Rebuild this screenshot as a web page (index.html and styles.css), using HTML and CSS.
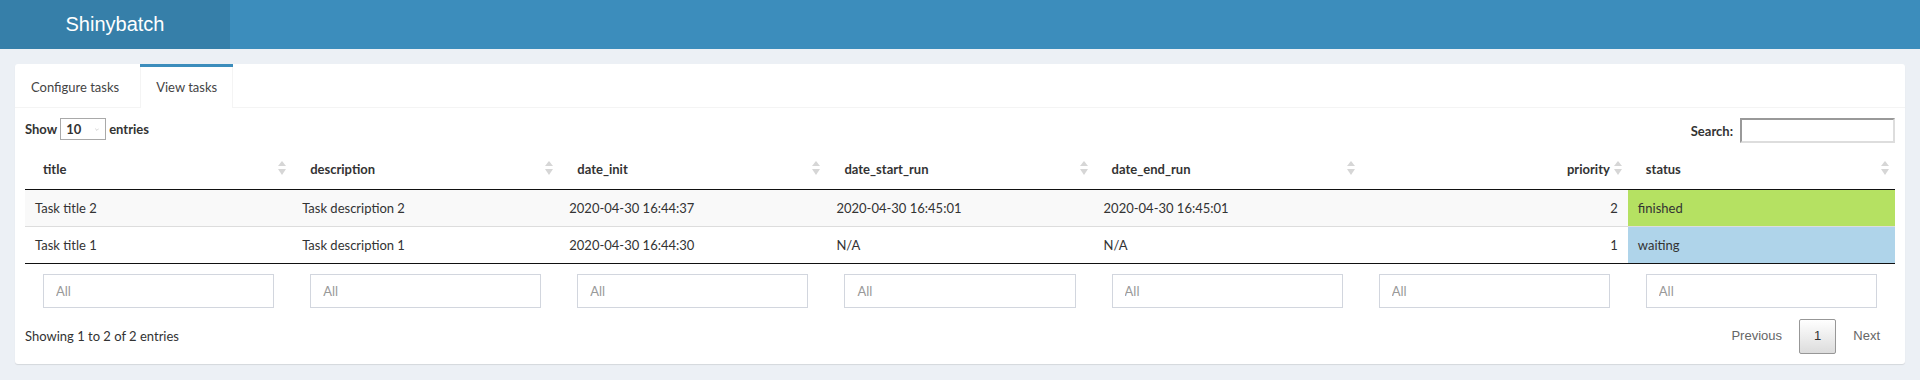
FILE: index.html
```html
<!DOCTYPE html>
<html lang="en">
<head>
    <meta charset="UTF-8">
    <meta name="viewport" content="width=device-width, initial-scale=1.0">
    <title>Shinybatch</title>
    <link rel="stylesheet" href="styles.css">
</head>
<body>
    <header class="main-header">
        <div class="logo">Shinybatch</div>
        <nav class="navbar"></nav>
    </header>

    <section class="content">
        <div class="nav-tabs-custom">
            <ul class="nav-tabs">
                <li><a href="#">Configure tasks</a></li>
                <li class="active"><a href="#">View tasks</a></li>
            </ul>

            <div class="tab-content">
                <div class="dt-top">
                    <div class="dt-length">
                        <span>Show</span>
                        <div class="length-select">
                            <span>10</span>
                            <svg width="9" height="5" viewBox="0 0 9 5"><path d="M0.5 0.5l4 4 4-4" fill="none" stroke="#999" stroke-width="1"/></svg>
                        </div>
                        <span>entries</span>
                    </div>
                    <div class="dt-filter">
                        <span>Search:</span>
                        <input type="search" class="search-input">
                    </div>
                </div>

                <table class="data-table">
                    <thead>
                        <tr>
                            <th>title<span class="sort-icon"></span></th>
                            <th>description<span class="sort-icon"></span></th>
                            <th>date_init<span class="sort-icon"></span></th>
                            <th>date_start_run<span class="sort-icon"></span></th>
                            <th>date_end_run<span class="sort-icon"></span></th>
                            <th class="num">priority<span class="sort-icon"></span></th>
                            <th>status<span class="sort-icon"></span></th>
                        </tr>
                    </thead>
                    <tbody>
                        <tr class="odd">
                            <td>Task title 2</td>
                            <td>Task description 2</td>
                            <td>2020-04-30 16:44:37</td>
                            <td>2020-04-30 16:45:01</td>
                            <td>2020-04-30 16:45:01</td>
                            <td class="num">2</td>
                            <td class="status-finished">finished</td>
                        </tr>
                        <tr>
                            <td>Task title 1</td>
                            <td>Task description 1</td>
                            <td>2020-04-30 16:44:30</td>
                            <td>N/A</td>
                            <td>N/A</td>
                            <td class="num">1</td>
                            <td class="status-waiting">waiting</td>
                        </tr>
                    </tbody>
                    <tfoot>
                        <tr>
                            <td><input type="text" class="col-filter" placeholder="All"></td>
                            <td><input type="text" class="col-filter" placeholder="All"></td>
                            <td><input type="text" class="col-filter" placeholder="All"></td>
                            <td><input type="text" class="col-filter" placeholder="All"></td>
                            <td><input type="text" class="col-filter" placeholder="All"></td>
                            <td><input type="text" class="col-filter" placeholder="All"></td>
                            <td><input type="text" class="col-filter" placeholder="All"></td>
                        </tr>
                    </tfoot>
                </table>

                <div class="dt-bottom">
                    <div class="dt-info">Showing 1 to 2 of 2 entries</div>
                    <div class="dt-paginate">
                        <a class="page-btn disabled">Previous</a>
                        <a class="page-btn current">1</a>
                        <a class="page-btn disabled">Next</a>
                    </div>
                </div>
            </div>
        </div>
    </section>
</body>
</html>
```

FILE: styles.css
```css
* {
    margin: 0;
    padding: 0;
    box-sizing: border-box;
}

body {
    font-family: Lato, "Noto Sans", sans-serif;
    font-size: 13px;
    line-height: 20px;
    color: #333;
    background: #ecf0f5;
}

.main-header {
    display: flex;
    height: 49px;
}

.logo {
    width: 230px;
    background: #367fa9;
    color: #fff;
    font-family: "Liberation Sans", Arial, sans-serif;
    font-size: 20px;
    line-height: 49px;
    text-align: center;
}

.navbar {
    flex: 1;
    background: #3c8dbc;
}

.content {
    padding: 15px;
}

.nav-tabs-custom {
    background: #fff;
    border-radius: 3px;
    box-shadow: 0 1px 1px rgba(0,0,0,0.1);
}

.nav-tabs {
    list-style: none;
    display: flex;
    border-bottom: 1px solid #f4f4f4;
}

.nav-tabs li {
    border-top: 3px solid transparent;
    margin-right: 5px;
    margin-bottom: -1px;
}

.nav-tabs li a {
    display: block;
    padding: 10px 15px 11px;
    color: #444;
    text-decoration: none;
    border-left: 1px solid transparent;
    border-right: 1px solid transparent;
}

.nav-tabs li.active {
    border-top-color: #3c8dbc;
}

.nav-tabs li.active a {
    background: #fff;
    border-left-color: #f4f4f4;
    border-right-color: #f4f4f4;
}

.tab-content {
    padding: 10px;
}

.dt-top {
    display: flex;
    justify-content: space-between;
    align-items: flex-start;
    height: 25px;
    font-weight: bold;
}

.dt-length {
    display: flex;
    align-items: center;
    gap: 3px;
    height: 22px;
}

.length-select {
    display: flex;
    align-items: center;
    gap: 14px;
    width: 46px;
    height: 22px;
    padding: 0 6px 0 5px;
    border: 1px solid #a9a9a9;
    background: #fff;
}

.dt-filter {
    display: flex;
    align-items: center;
    gap: 7px;
}

.search-input {
    width: 155px;
    height: 25px;
    border-top: 2px solid #999;
    border-left: 2px solid #999;
    border-bottom: 2px solid #ddd;
    border-right: 2px solid #ddd;
    outline: none;
}

.data-table {
    width: 100%;
    table-layout: fixed;
    border-collapse: separate;
    border-spacing: 0;
    margin-top: 6px;
}

.data-table th {
    position: relative;
    padding: 10px 18px;
    text-align: left;
    font-weight: bold;
    border-bottom: 1px solid #111;
}

.data-table td {
    padding: 8px 10px;
    white-space: nowrap;
}

.data-table tbody tr + tr td {
    border-top: 1px solid #ddd;
}

.data-table tbody tr.odd td {
    background: #f9f9f9;
}

.data-table .num {
    text-align: right;
}

.data-table tbody tr td.status-finished {
    background: #b5e162;
}

.data-table tbody tr td.status-waiting {
    background: #afd4ea;
}

.sort-icon {
    position: absolute;
    right: 6px;
    top: 12px;
    width: 8px;
    height: 14px;
}

.sort-icon::before,
.sort-icon::after {
    content: "";
    position: absolute;
    left: 0;
    border-left: 4px solid transparent;
    border-right: 4px solid transparent;
}

.sort-icon::before {
    top: 0;
    border-bottom: 5px solid #d6d6d6;
}

.sort-icon::after {
    bottom: 0;
    border-top: 6px solid #d6d6d6;
}

.data-table tfoot td {
    padding: 10px 18px;
    border-top: 1px solid #111;
}

.col-filter {
    display: block;
    width: 100%;
    height: 34px;
    padding: 6px 12px;
    border: 1px solid #d2d6de;
    font-family: inherit;
    font-size: 13px;
    color: #555;
    outline: none;
}

.col-filter::placeholder {
    color: #999;
}

.dt-bottom {
    display: flex;
    justify-content: space-between;
    align-items: center;
}

.dt-paginate {
    display: flex;
    align-items: center;
    gap: 2px;
}

.page-btn {
    padding: 7px 14px;
    font-family: "Liberation Sans", Arial, sans-serif;
    font-size: 13px;
    line-height: 20px;
    border: 1px solid transparent;
    border-radius: 2px;
    color: #333;
}

.page-btn.disabled {
    color: #666;
}

.page-btn.current {
    padding: 6px 14px 7px;
    border-color: #979797;
    background: linear-gradient(to bottom, #fff 0%, #dcdcdc 100%);
}
```
